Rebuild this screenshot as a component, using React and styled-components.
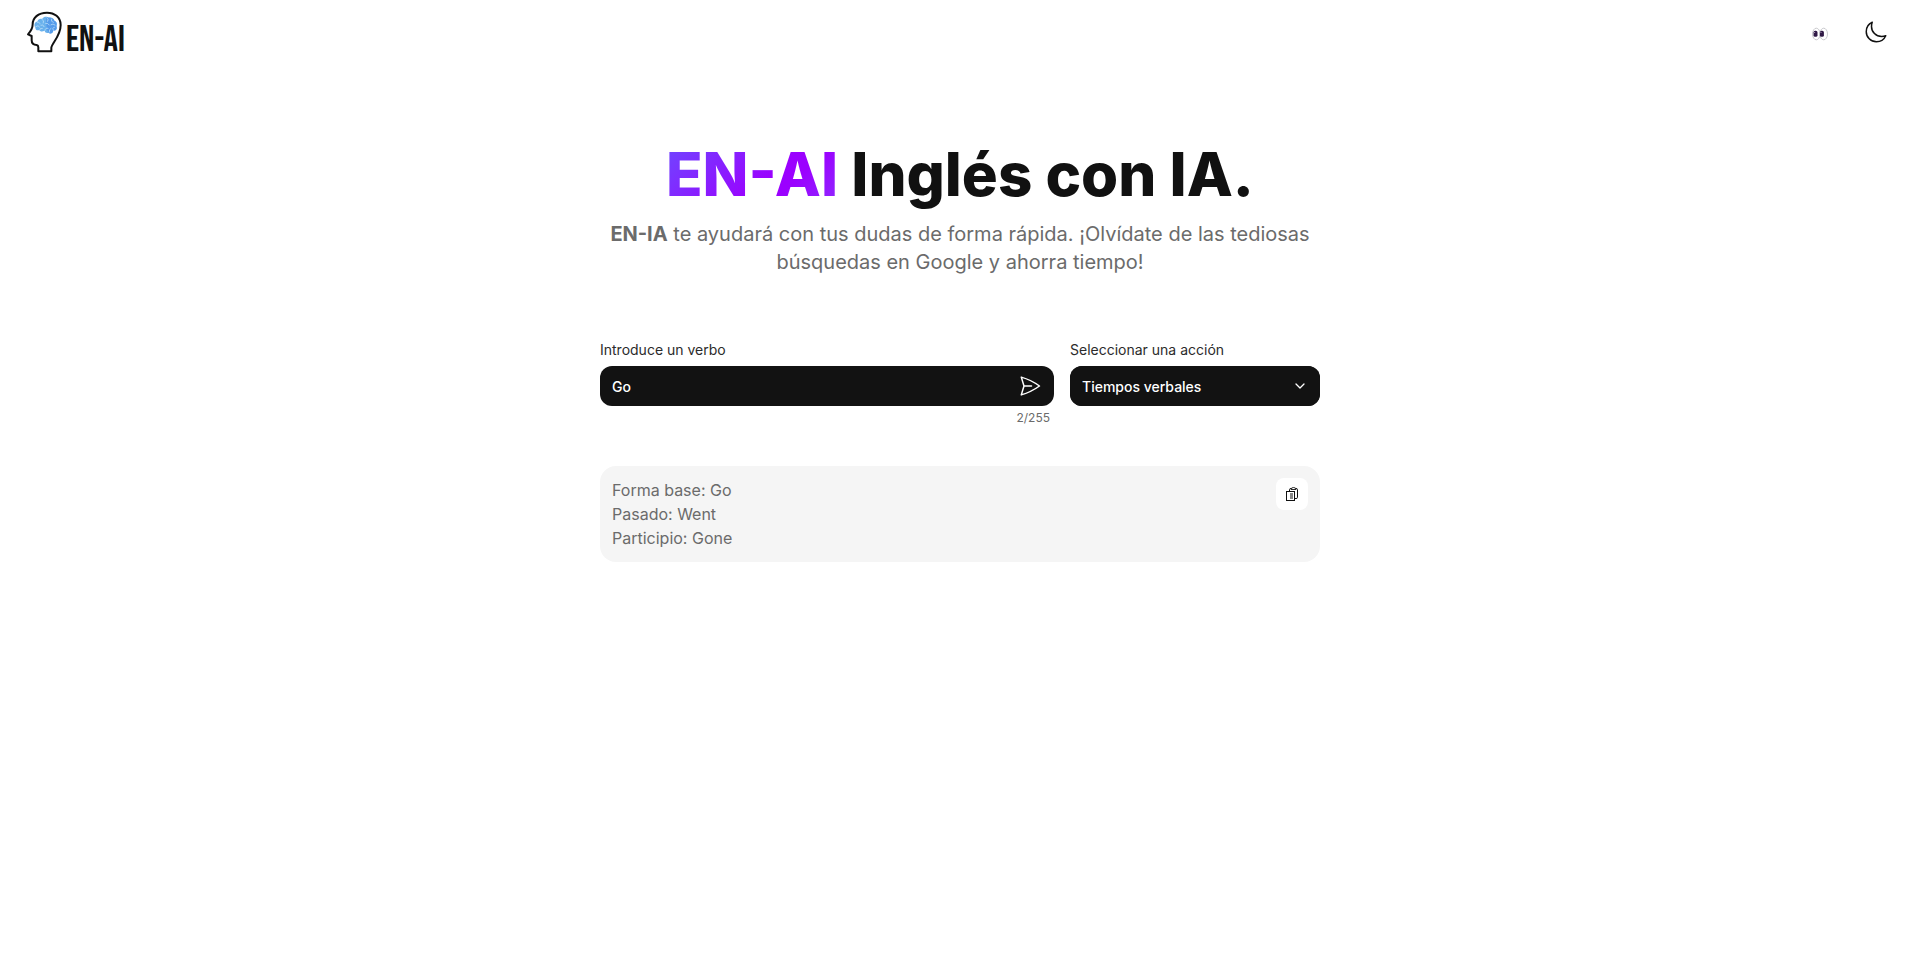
import React, { useState } from "react";
import styled, { createGlobalStyle } from "styled-components";
import { IoMoonOutline } from "react-icons/io5";
import { HiOutlinePaperAirplane } from "react-icons/hi2";

const GlobalStyle = createGlobalStyle`
  * { box-sizing: border-box; }
  body {
    margin: 0;
    background: #fff;
    color: #111;
    font-family: Inter, "Liberation Sans", sans-serif;
  }
  button, input, select { font: inherit; }
`;

const Header = styled.header`
  display: flex;
  align-items: center;
  justify-content: space-between;
  height: 64px;
  padding: 0 32px 0 24px;
`;

const Brand = styled.a`
  display: flex;
  align-items: flex-end;
  color: #111;
  text-decoration: none;
`;

const BrandName = styled.span`
  font-family: "Bebas Neue", "Roboto Condensed", Roboto, sans-serif;
  font-size: 36px;
  font-weight: 600;
  line-height: 30px;
`;

const Actions = styled.div`
  display: flex;
  align-items: center;
  gap: 36px;
`;

const IconButton = styled.button`
  display: flex;
  align-items: center;
  justify-content: center;
  padding: 0;
  border: 0;
  background: none;
  color: inherit;
  cursor: pointer;
`;

const Main = styled.main`
  display: flex;
  flex-direction: column;
  width: 100%;
  max-width: 752px;
  margin: 0 auto;
  padding: 80px 16px 32px;
`;

const Title = styled.h1`
  margin: 0;
  font-size: 60px;
  font-weight: 800;
  line-height: 60px;
  text-align: center;
`;

const Highlight = styled.span`
  color: transparent;
  background: linear-gradient(135deg, #6d4aff, #9b00ff 60%, #9b00ff 70%, #8f2bff);
  background-clip: text;
  -webkit-background-clip: text;
`;

const Intro = styled.p`
  margin: 16px 0 64px;
  color: #6b6b6b;
  font-size: 20px;
  line-height: 28px;
  text-align: center;
`;

const Form = styled.form`
  display: flex;
  gap: 16px;
  margin-bottom: 40px;
`;

const Field = styled.div`
  display: flex;
  flex-direction: column;
  flex: ${({ $width }) => ($width ? `0 0 ${$width}` : "1 1 0")};
  min-width: 0;
`;

const Label = styled.label`
  margin-bottom: 6px;
  color: #2b2b2b;
  font-size: 14px;
  line-height: 20px;
`;

const Control = styled.div`
  display: flex;
  align-items: center;
  position: relative;
  height: 40px;
  border-radius: 12px;
  background: #121212;
  color: #fff;
`;

const VerbInput = styled.input`
  flex: 1;
  min-width: 0;
  height: 100%;
  padding: 0 12px;
  border: 0;
  outline: 0;
  background: none;
  color: inherit;
  font-size: 14px;
  font-weight: 500;
`;

const SendButton = styled(IconButton)`
  width: 48px;
  height: 100%;
`;

const ActionSelect = styled.select`
  width: 100%;
  height: 100%;
  padding: 0 36px 0 12px;
  border: 0;
  border-radius: 12px;
  outline: 0;
  appearance: none;
  background: #121212;
  color: inherit;
  font-size: 14px;
  font-weight: 500;
`;

const Chevron = styled.svg`
  position: absolute;
  right: 12px;
  pointer-events: none;
`;

const Counter = styled.span`
  align-self: flex-end;
  margin-top: 4px;
  padding-right: 4px;
  color: #6b6b6b;
  font-size: 12px;
  line-height: 16px;
`;

const Result = styled.section`
  display: flex;
  align-items: flex-start;
  justify-content: space-between;
  padding: 12px;
  border-radius: 16px;
  background: #f5f5f5;
  color: #6b6b6b;
`;

const Forms = styled.ul`
  margin: 0;
  padding: 0;
  list-style: none;
  font-size: 16px;
  line-height: 24px;
`;

const CopyButton = styled(IconButton)`
  width: 32px;
  height: 32px;
  border-radius: 8px;
  background: #fff;
  color: #111;
`;

function HeadLogo() {
  return (
    <svg width="42" height="48" viewBox="0 0 126 144" fill="none" aria-hidden="true">
      <path
        d="M43 130H82V119C84 105 110 84 110 51C110 27 91 14 69 14C42 14 26 30 26 49C26 61 22 68 12 79L23 84V97C23 108 29 111 38 111Q43 112 43 118Z"
        stroke="#111" strokeWidth="6" strokeLinejoin="round"
      />
      <path
        d="M34 59C28 48 34 40 40 41C42 32 50 31 54 33C60 24 70 26 74 29C83 26 90 32 91 38C99 40 100 49 97 54C101 64 94 69 88 67C87 76 80 79 74 74C68 76 63 74 62 68C55 72 48 71 46 66C39 69 34 65 34 59Z"
        fill="#69b1ec"
      />
      <path d="M66 30C76 27 88 30 91 38C99 42 99 49 97 54C101 65 94 69 88 67C87 77 79 79 74 74L68 63Z" fill="#559bea" />
      <path
        d="M40 43Q47 40 48 48M54 34Q62 37 58 45M69 30Q76 33 71 40M83 33Q80 41 88 43M35 56Q43 49 47 57M51 52Q59 48 60 56M65 46Q72 44 76 51M81 50Q87 45 93 51M47 66Q47 59 55 61M63 67Q64 58 72 61M76 72Q74 64 81 61M88 66Q83 59 91 58"
        stroke="#b5dbf8" strokeWidth="2.5" strokeLinecap="round"
      />
    </svg>
  );
}

function Eyes() {
  return (
    <svg width="16" height="18" viewBox="0 0 16 18" aria-hidden="true">
      <ellipse cx="4.3" cy="11" rx="3.8" ry="5.8" fill="#fff" stroke="#c9c9cd" />
      <ellipse cx="11.7" cy="11" rx="3.8" ry="5.8" fill="#fff" stroke="#c9c9cd" />
      <rect x="1.5" y="7.8" width="4" height="6" rx="1.6" fill="#2f1845" />
      <rect x="7.9" y="7.8" width="4" height="6" rx="1.6" fill="#2f1845" />
      <circle cx="2.6" cy="9.5" r="0.6" fill="#b7a9c4" />
      <circle cx="9" cy="9.5" r="0.6" fill="#b7a9c4" />
    </svg>
  );
}

function ClipboardIcon() {
  return (
    <svg width="16" height="16" viewBox="0 0 16 16" fill="none" stroke="currentColor" aria-hidden="true">
      <path d="M5.5 5V3.5Q5.5 2.5 7 2.5M12 2.5Q13.5 2.5 13.5 3.5V11.5Q13.5 12.5 12 12.5H11" />
      <path d="M7 3.5Q7 1.5 9.5 1.5T12 3.5Z" strokeWidth="0.9" />
      <rect x="2.5" y="5.5" width="8" height="9" />
      <path d="M6 7V13H9V7Z" fill="#888" stroke="none" />
    </svg>
  );
}

export default function App() {
  const [verb, setVerb] = useState("Go");
  return (
    <>
      <GlobalStyle />
      <Header>
        <Brand href="#">
          <HeadLogo />
          <BrandName>EN-AI</BrandName>
        </Brand>
        <Actions>
          <IconButton type="button" aria-label="Ver"><Eyes /></IconButton>
          <IconButton type="button" aria-label="Modo oscuro"><IoMoonOutline size={24} /></IconButton>
        </Actions>
      </Header>
      <Main>
        <Title><Highlight>EN-AI</Highlight> Inglés con IA.</Title>
        <Intro>
          <strong>EN-IA</strong> te ayudará con tus dudas de forma rápida. ¡Olvídate de las tediosas búsquedas en Google y ahorra tiempo!
        </Intro>
        <Form onSubmit={(e) => e.preventDefault()}>
          <Field>
            <Label htmlFor="verb">Introduce un verbo</Label>
            <Control>
              <VerbInput id="verb" maxLength={255} value={verb} onChange={(e) => setVerb(e.target.value)} />
              <SendButton type="submit" aria-label="Enviar"><HiOutlinePaperAirplane size={24} /></SendButton>
            </Control>
            <Counter>{verb.length}/255</Counter>
          </Field>
          <Field $width="250px">
            <Label htmlFor="action">Seleccionar una acción</Label>
            <Control>
              <ActionSelect id="action">
                <option>Tiempos verbales</option>
              </ActionSelect>
              <Chevron width="16" height="16" viewBox="0 0 16 16" fill="none" stroke="currentColor" strokeWidth="1.3" strokeLinecap="round" strokeLinejoin="round">
                <path d="M4 6L8 10L12 6" />
              </Chevron>
            </Control>
          </Field>
        </Form>
        <Result>
          <Forms>
            <li>Forma base: Go</li>
            <li>Pasado: Went</li>
            <li>Participio: Gone</li>
          </Forms>
          <CopyButton type="button" aria-label="Copiar"><ClipboardIcon /></CopyButton>
        </Result>
      </Main>
    </>
  );
}
